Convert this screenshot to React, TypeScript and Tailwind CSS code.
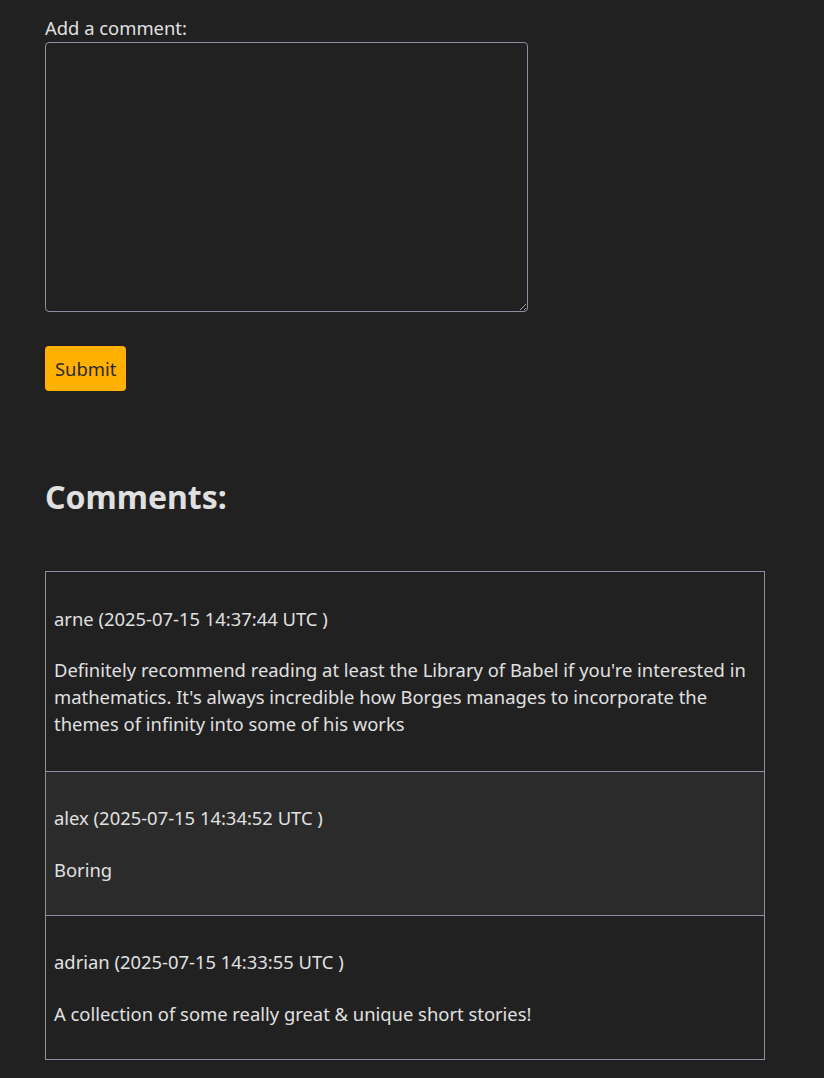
const COMMENTS = [
  {
    author: "arne",
    date: "2025-07-15 14:37:44 UTC",
    text: "Definitely recommend reading at least the Library of Babel if you're interested in mathematics. It's always incredible how Borges manages to incorporate the themes of infinity into some of his works",
  },
  { author: "alex", date: "2025-07-15 14:34:52 UTC", text: "Boring" },
  { author: "adrian", date: "2025-07-15 14:33:55 UTC", text: "A collection of some really great & unique short stories!" },
];

export default function App() {
  return (
    <div className="min-h-[1078px] bg-[#212121] text-[#e0e0e0] font-['Noto_Sans',sans-serif] text-[18.4px] leading-[27px] pl-[45px] pt-[14px] pb-[19px]">
      {/* Comment form */}
      <label className="block">Add a comment:</label>
      <textarea className="mt-[1px] block w-[483px] h-[270px] bg-[#212121] border border-[#8e8ea0] rounded-[4px] text-[#e0e0e0] p-2" />
      <button className="mt-[34px] block bg-[#ffb000] text-[#2a2a2a] rounded-[4px] px-[10px] py-[9px] leading-[27px]">
        Submit
      </button>

      <h2 className="mt-[82px] text-[32px] leading-[48px] font-bold">Comments:</h2>

      {/* Comment list */}
      <div className="mt-[50px] w-[720px] border-b border-[#8e8ea0]">
        {COMMENTS.map((c, i) => (
          <div
            key={i}
            className={`border-t border-x border-[#8e8ea0] px-2 ${i === 1 ? "bg-[#2b2b2b]" : "bg-[#212121]"} ${i === 0 ? "pt-[33px] pb-[34px]" : "pt-[32px] pb-[32px]"}`}
          >
            <p>
              {c.author} ({c.date} )
            </p>
            <p className={i === 0 ? "mt-[24px]" : "mt-[25px]"}>{c.text}</p>
          </div>
        ))}
      </div>
    </div>
  );
}
